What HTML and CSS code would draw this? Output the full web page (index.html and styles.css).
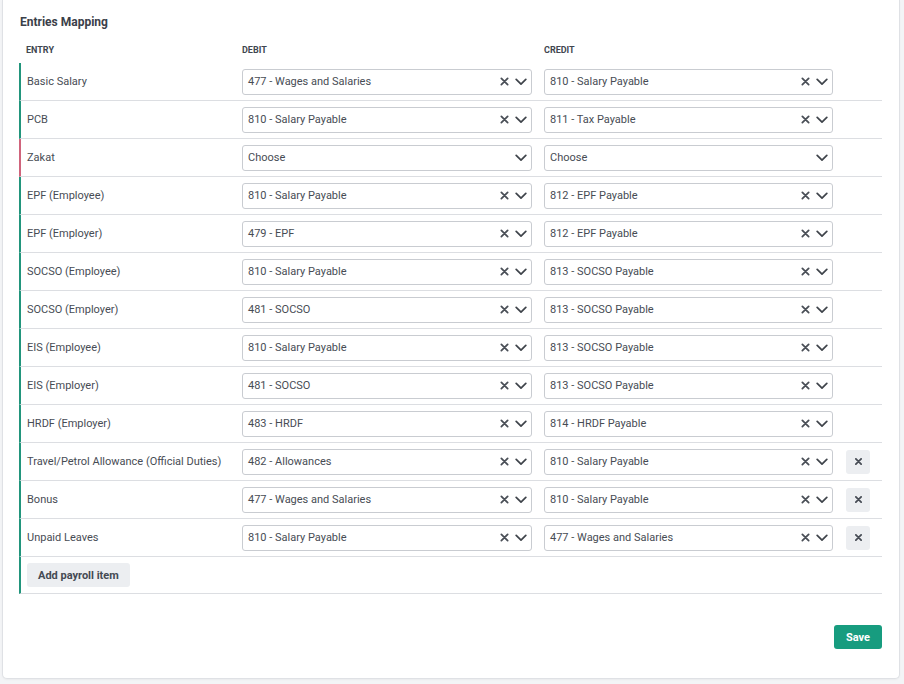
FILE: index.html
```html
<!DOCTYPE html>
<html lang="en">
<head>
  <meta charset="UTF-8">
  <title>Entries Mapping</title>
  <link rel="stylesheet" href="styles.css">
</head>
<body>
<div class="card">
  <h3 class="card-title">Entries Mapping</h3>

  <div class="map-head">
    <div>Entry</div>
    <div>Debit</div>
    <div>Credit</div>
    <div></div>
  </div>

  <div class="map-body" id="mapBody"></div>

  <div class="card-foot">
    <button class="btn-save">Save</button>
  </div>
</div>

<script>
  const rows = [
    ['Basic Salary', '477 - Wages and Salaries', '810 - Salary Payable'],
    ['PCB', '810 - Salary Payable', '811 - Tax Payable'],
    ['Zakat', '', '', 'missing'],
    ['EPF (Employee)', '810 - Salary Payable', '812 - EPF Payable'],
    ['EPF (Employer)', '479 - EPF', '812 - EPF Payable'],
    ['SOCSO (Employee)', '810 - Salary Payable', '813 - SOCSO Payable'],
    ['SOCSO (Employer)', '481 - SOCSO', '813 - SOCSO Payable'],
    ['EIS (Employee)', '810 - Salary Payable', '813 - SOCSO Payable'],
    ['EIS (Employer)', '481 - SOCSO', '813 - SOCSO Payable'],
    ['HRDF (Employer)', '483 - HRDF', '814 - HRDF Payable'],
    ['Travel/Petrol Allowance (Official Duties)', '482 - Allowances', '810 - Salary Payable', 'custom'],
    ['Bonus', '477 - Wages and Salaries', '810 - Salary Payable', 'custom'],
    ['Unpaid Leaves', '810 - Salary Payable', '477 - Wages and Salaries', 'custom']
  ];

  const clearIcon = '<svg class="ic-clear" width="9" height="9" viewBox="0 0 10 10"><path d="M1.5 1.5l7 7M8.5 1.5l-7 7" stroke="#4a4f57" stroke-width="2" stroke-linecap="round"/></svg>';
  const chevIcon = '<svg class="ic-chev" width="12" height="8" viewBox="0 0 12 8"><path d="M1.2 1.4L6 6.2l4.8-4.8" fill="none" stroke="#3f444b" stroke-width="1.7" stroke-linecap="round" stroke-linejoin="round"/></svg>';
  const smallX = '<svg width="7" height="7" viewBox="0 0 8 8"><path d="M1 1l6 6M7 1L1 7" stroke="#474c55" stroke-width="2" stroke-linecap="round"/></svg>';

  function select(value) {
    const label = value || 'Choose';
    return '<div class="select"><span class="select-val">' + label + '</span>' +
      (value ? clearIcon : '') + chevIcon + '</div>';
  }

  const body = document.getElementById('mapBody');
  rows.forEach(r => {
    const row = document.createElement('div');
    row.className = 'map-row' + (r[3] === 'missing' ? ' missing' : '');
    row.innerHTML =
      '<div class="entry">' + r[0] + '</div>' +
      '<div class="cell">' + select(r[1]) + '</div>' +
      '<div class="cell">' + select(r[2]) + '</div>' +
      '<div class="cell act">' + (r[3] === 'custom' ? '<button class="btn-remove">' + smallX + '</button>' : '') + '</div>';
    body.appendChild(row);
  });

  const addRow = document.createElement('div');
  addRow.className = 'map-row add-row';
  addRow.innerHTML = '<button class="btn-add">Add payroll item</button>';
  body.appendChild(addRow);
</script>
</body>
</html>
```

FILE: styles.css
```css
body {
  margin: 0;
  padding: 0 4px 5px 2px;
  background: #f3f4f6;
  font-family: Roboto, "Liberation Sans", sans-serif;
  color: #474c54;
}

.card {
  background: #fff;
  border: 1px solid #dfe1e5;
  border-top: 0;
  border-radius: 0 0 5px 5px;
  padding: 13px 17px 29px 16px;
  box-shadow: 0 1px 2px rgba(0, 0, 0, 0.04);
}

.card-title {
  margin: 0 0 7px 0;
  padding-left: 1px;
  font-size: 12px;
  line-height: 18px;
  font-weight: 700;
  color: #3b4049;
}

.map-head,
.map-row {
  display: grid;
  grid-template-columns: 215px 302px 302px 43px;
}

.map-head {
  height: 25px;
  line-height: 25px;
  font-size: 9px;
  font-weight: 700;
  text-transform: uppercase;
  color: #41464f;
  padding-left: 2px;
}

.map-head div:first-child {
  padding-left: 5px;
}

.map-head div {
  padding-left: 6px;
}

.map-row {
  height: 38px;
  box-sizing: border-box;
  border-left: 2px solid #22957c;
  border-bottom: 1px solid #dcdee2;
  align-items: center;
}

.map-row.missing {
  border-left-color: #d0647c;
}

.entry {
  padding-left: 6px;
  font-size: 11px;
}

.cell {
  padding-left: 6px;
}

.select {
  width: 290px;
  height: 26px;
  box-sizing: border-box;
  border: 1px solid #c9ccd1;
  border-radius: 3px;
  display: flex;
  align-items: center;
  padding: 0 4px 0 5px;
  font-size: 11px;
  color: #474c54;
}

.cell + .cell .select {
  width: 289px;
}

.select-val {
  flex: 1;
}

.ic-clear {
  margin-right: 6px;
}

.btn-remove {
  width: 24px;
  height: 24px;
  border: none;
  border-radius: 3px;
  background: #eceef1;
  display: flex;
  align-items: center;
  justify-content: center;
  padding: 0;
}

.add-row {
  height: 37px;
  display: flex;
  padding-left: 6px;
}

.btn-add {
  height: 24px;
  padding: 0 11px;
  border: none;
  border-radius: 3px;
  background: #eceef1;
  font-family: Roboto, "Liberation Sans", sans-serif;
  font-size: 11px;
  font-weight: 700;
  color: #444a53;
}

.card-foot {
  display: flex;
  justify-content: flex-end;
  margin-top: 31px;
}

.btn-save {
  height: 24px;
  padding: 0 12px;
  border: none;
  border-radius: 3px;
  background: #179c7f;
  color: #fff;
  font-family: Roboto, "Liberation Sans", sans-serif;
  font-size: 11px;
  font-weight: 700;
}
```
